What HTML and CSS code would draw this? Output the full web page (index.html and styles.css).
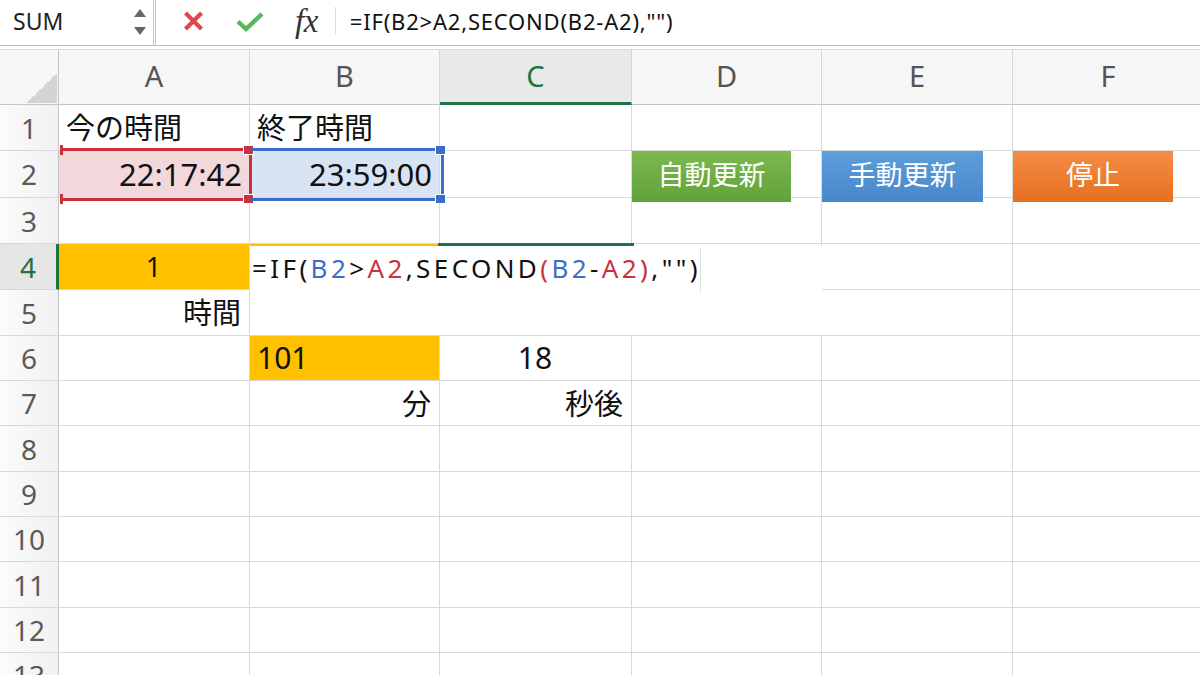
FILE: index.html
```html
<!DOCTYPE html>
<html lang="ja">
<head>
<meta charset="utf-8">
<title>Excel</title>
<link rel="stylesheet" href="styles.css">
</head>
<body>
<div class="fbar">
  <div class="namebox">
    <span class="name">SUM</span>
    <svg class="spin" width="14" height="30" viewBox="0 0 14 30"><polygon points="7,2 13,10 1,10" fill="#666"/><polygon points="1,20 13,20 7,28" fill="#666"/></svg>
  </div>
  <svg class="icon-x" width="21" height="20" viewBox="0 0 21 20"><path d="M2.5 2 L18.5 18 M18.5 2 L2.5 18" stroke="#e0474c" stroke-width="4.2" stroke-linecap="butt"/></svg>
  <svg class="icon-ok" width="28" height="21" viewBox="0 0 28 21"><path d="M2 10.5 L10 18 L26 3" stroke="#5cb55a" stroke-width="4.4" fill="none" stroke-linejoin="miter"/></svg>
  <span class="fx">fx</span>
  <span class="fsep"></span>
  <span class="ftext">=IF(B2&gt;A2,SECOND(B2-A2),"")</span>
</div>
<div class="gap"></div>
<div class="sheet">
  <div class="corner"></div>
  <div class="hc">A</div><div class="hc">B</div><div class="hc act">C</div><div class="hc">D</div><div class="hc">E</div><div class="hc">F</div>

  <div class="hr">1</div>
  <div class="c jp">今の時間</div><div class="c jp">終了時間</div><div class="c"></div><div class="c"></div><div class="c"></div><div class="c"></div>

  <div class="hr">2</div>
  <div class="c r time pink">22:17:42</div><div class="c r time lblue">23:59:00</div><div class="c"></div><div class="c"></div><div class="c"></div><div class="c"></div>

  <div class="hr">3</div>
  <div class="c"></div><div class="c"></div><div class="c"></div><div class="c"></div><div class="c"></div><div class="c"></div>

  <div class="hr act">4</div>
  <div class="c ctr gold small">1</div><div class="c gold"></div><div class="c"></div><div class="c"></div><div class="c"></div><div class="c"></div>

  <div class="hr">5</div>
  <div class="c r jp">時間</div><div class="c"></div><div class="c"></div><div class="c"></div><div class="c"></div><div class="c"></div>

  <div class="hr">6</div>
  <div class="c"></div><div class="c gold">101</div><div class="c ctr">18</div><div class="c"></div><div class="c"></div><div class="c"></div>

  <div class="hr">7</div>
  <div class="c"></div><div class="c r jp">分</div><div class="c r jp">秒後</div><div class="c"></div><div class="c"></div><div class="c"></div>

  <div class="hr">8</div>
  <div class="c"></div><div class="c"></div><div class="c"></div><div class="c"></div><div class="c"></div><div class="c"></div>
  <div class="hr">9</div>
  <div class="c"></div><div class="c"></div><div class="c"></div><div class="c"></div><div class="c"></div><div class="c"></div>
  <div class="hr">10</div>
  <div class="c"></div><div class="c"></div><div class="c"></div><div class="c"></div><div class="c"></div><div class="c"></div>
  <div class="hr">11</div>
  <div class="c"></div><div class="c"></div><div class="c"></div><div class="c"></div><div class="c"></div><div class="c"></div>
  <div class="hr">12</div>
  <div class="c"></div><div class="c"></div><div class="c"></div><div class="c"></div><div class="c"></div><div class="c"></div>
  <div class="hr">13</div>
  <div class="c"></div><div class="c"></div><div class="c"></div><div class="c"></div><div class="c"></div><div class="c"></div>

  <div class="sel sel-a"><span class="h h-tl"></span><span class="h h-tr"></span><span class="h h-bl"></span><span class="h h-br"></span></div>
  <div class="sel sel-b"><span class="h h-tr"></span><span class="h h-br"></span></div>

  <div class="edit"><span>=IF(</span><span class="fb">B2</span><span>&gt;</span><span class="fr">A2</span><span>,SECOND</span><span class="fr">(</span><span class="fb">B2</span><span>-</span><span class="fr">A2)</span><span>,"")</span></div>
  <div class="active-top"></div>

  <div class="shape green">自動更新</div>
  <div class="shape blue">手動更新</div>
  <div class="shape orange">停止</div>
</div>
</body>
</html>
```
FILE: styles.css
```css
html, body {
  margin: 0;
  padding: 0;
}
body {
  width: 1200px;
  height: 675px;
  overflow: hidden;
  background: #fff;
  font-family: "Noto Sans", "Noto Sans CJK JP", sans-serif;
  color: #111;
}

/* formula bar */
.fbar {
  display: flex;
  align-items: center;
  height: 46px;
  box-sizing: border-box;
  border-bottom: 1px solid #b9b9b9;
  padding-bottom: 3px;
}
.namebox {
  width: 156px;
  height: 46px;
  margin-bottom: -3px;
  box-sizing: border-box;
  display: flex;
  align-items: center;
  justify-content: space-between;
  padding: 0 6px 3px 13px;
  border-right: 3px double #c6c6c6;
}
.name {
  font-size: 23px;
  color: #222;
}
.spin {
  display: block;
  margin-top: 2px;
}
.icon-x {
  margin-left: 27px;
}
.icon-ok {
  margin-left: 32px;
}
.fx {
  margin-left: 31px;
  font-family: "Liberation Serif", serif;
  font-style: italic;
  font-size: 33px;
  color: #333;
  line-height: 1;
  letter-spacing: -0.5px;
}
.fsep {
  margin-left: 17px;
  width: 1px;
  height: 28px;
  background: #dcdcdc;
}
.ftext {
  margin-left: 14px;
  font-size: 22px;
  letter-spacing: 0.8px;
  color: #111;
}
.gap {
  height: 3px;
  border-bottom: 1px solid #dadada;
}

/* sheet */
.sheet {
  position: relative;
  display: grid;
  grid-template-columns: 59px 191px 190px 192px 190px 191px 191px;
  grid-template-rows: 55px 46px 47px 46px 46px 46px 45px 45px 46px 45px 45px 46px 45px 45px;
}
.c {
  box-sizing: border-box;
  border-right: 1px solid #d8d8d8;
  border-bottom: 1px solid #d8d8d8;
  display: flex;
  align-items: center;
  padding: 0 8px 0 7px;
  font-size: 30px;
  white-space: nowrap;
  line-height: 1;
}
.c.jp {
  font-size: 29px;
}
.c.r {
  justify-content: flex-end;
}
.c.ctr {
  justify-content: center;
}
.c.time {
  font-size: 31px;
  padding-right: 7px;
}
.c.small {
  font-size: 27px;
}
.pink {
  background: #f3d8db;
}
.lblue {
  background: #d8e3f4;
}
.gold {
  background: #ffc000;
}

.hc {
  box-sizing: border-box;
  background: #f6f6f6;
  border-right: 1px solid #d6d6d6;
  border-bottom: 1px solid #c4c4c4;
  display: flex;
  align-items: center;
  justify-content: center;
  padding-bottom: 3px;
  font-size: 29px;
  color: #555;
}
.hc.act {
  background: #e9e9e9;
  color: #217346;
  border-bottom: 3px solid #217346;
  padding-bottom: 1px;
}
.hr {
  box-sizing: border-box;
  background: linear-gradient(to right, #fbfbfb, #f1f1f1);
  border-right: 1px solid #c6c6c6;
  border-bottom: 1px solid #d8d8d8;
  display: flex;
  align-items: center;
  justify-content: center;
  font-size: 28px;
  color: #5a5a5a;
}
.hr.act {
  background: #e6e6e6;
  color: #217346;
  border-right: 3px solid #217346;
}
.corner {
  position: relative;
  background: #f6f6f6;
  border-right: 1px solid #c6c6c6;
  border-bottom: 1px solid #c4c4c4;
}
.corner::after {
  content: "";
  position: absolute;
  right: 1px;
  bottom: 1px;
  width: 30px;
  height: 30px;
  background: linear-gradient(to top left, #d4d4d4 50%, transparent 50%);
}

/* selections */
.sel {
  position: absolute;
  top: 98px;
  height: 53px;
  box-sizing: border-box;
  border-style: solid;
  border-width: 3px 3px 3px 0;
  z-index: 2;
}
.sel-a {
  left: 60px;
  width: 192px;
  border-color: #c7323e;
}
.sel-b {
  left: 252px;
  width: 192px;
  border-color: #3a6dc9;
}
.h {
  position: absolute;
  width: 11px;
  height: 10px;
  box-sizing: border-box;
  border: 1px solid #fff;
}
.sel-a .h {
  background: #c7323e;
}
.sel-b .h {
  background: #3a6dc9;
}
.sel-a .h-tl, .sel-a .h-bl {
  left: 0;
  width: 3px;
  border: none;
}
.h-tl, .h-tr {
  top: -6px;
}
.h-bl, .h-br {
  bottom: -6px;
}
.sel-a .h-tr, .sel-a .h-br {
  left: 183px;
}
.sel-b .h-tr, .sel-b .h-br {
  left: 183px;
}

/* in-cell edit */
.edit {
  position: absolute;
  left: 250px;
  top: 196px;
  width: 572px;
  height: 89px;
  box-sizing: border-box;
  background: #fff;
  padding-left: 2px;
  font-size: 26px;
  letter-spacing: 3.4px;
  line-height: 44px;
  white-space: nowrap;
  color: #111;
  z-index: 3;
}
.edit::after {
  content: "";
  position: absolute;
  left: 450px;
  top: 2px;
  width: 1px;
  height: 44px;
  background: #e2e2e2;
}
.fb {
  color: #3a6fcc;
}
.fr {
  color: #c8323c;
}
.active-top {
  position: absolute;
  left: 438px;
  top: 193px;
  width: 196px;
  height: 3px;
  background: #217346;
  z-index: 4;
}

/* shapes */
.shape {
  position: absolute;
  top: 101px;
  height: 51px;
  box-sizing: border-box;
  padding-bottom: 7px;
  display: flex;
  align-items: center;
  justify-content: center;
  color: #fff;
  font-family: "Noto Sans CJK JP", sans-serif;
  font-size: 27px;
  line-height: 1;
  z-index: 2;
}
.green {
  left: 632px;
  width: 159px;
  background: linear-gradient(#7db94f, #62a23a);
}
.blue {
  left: 822px;
  width: 161px;
  background: linear-gradient(#5d9edb, #4887cb);
}
.orange {
  left: 1013px;
  width: 160px;
  background: linear-gradient(#f38c46, #e86f1e);
}
```
